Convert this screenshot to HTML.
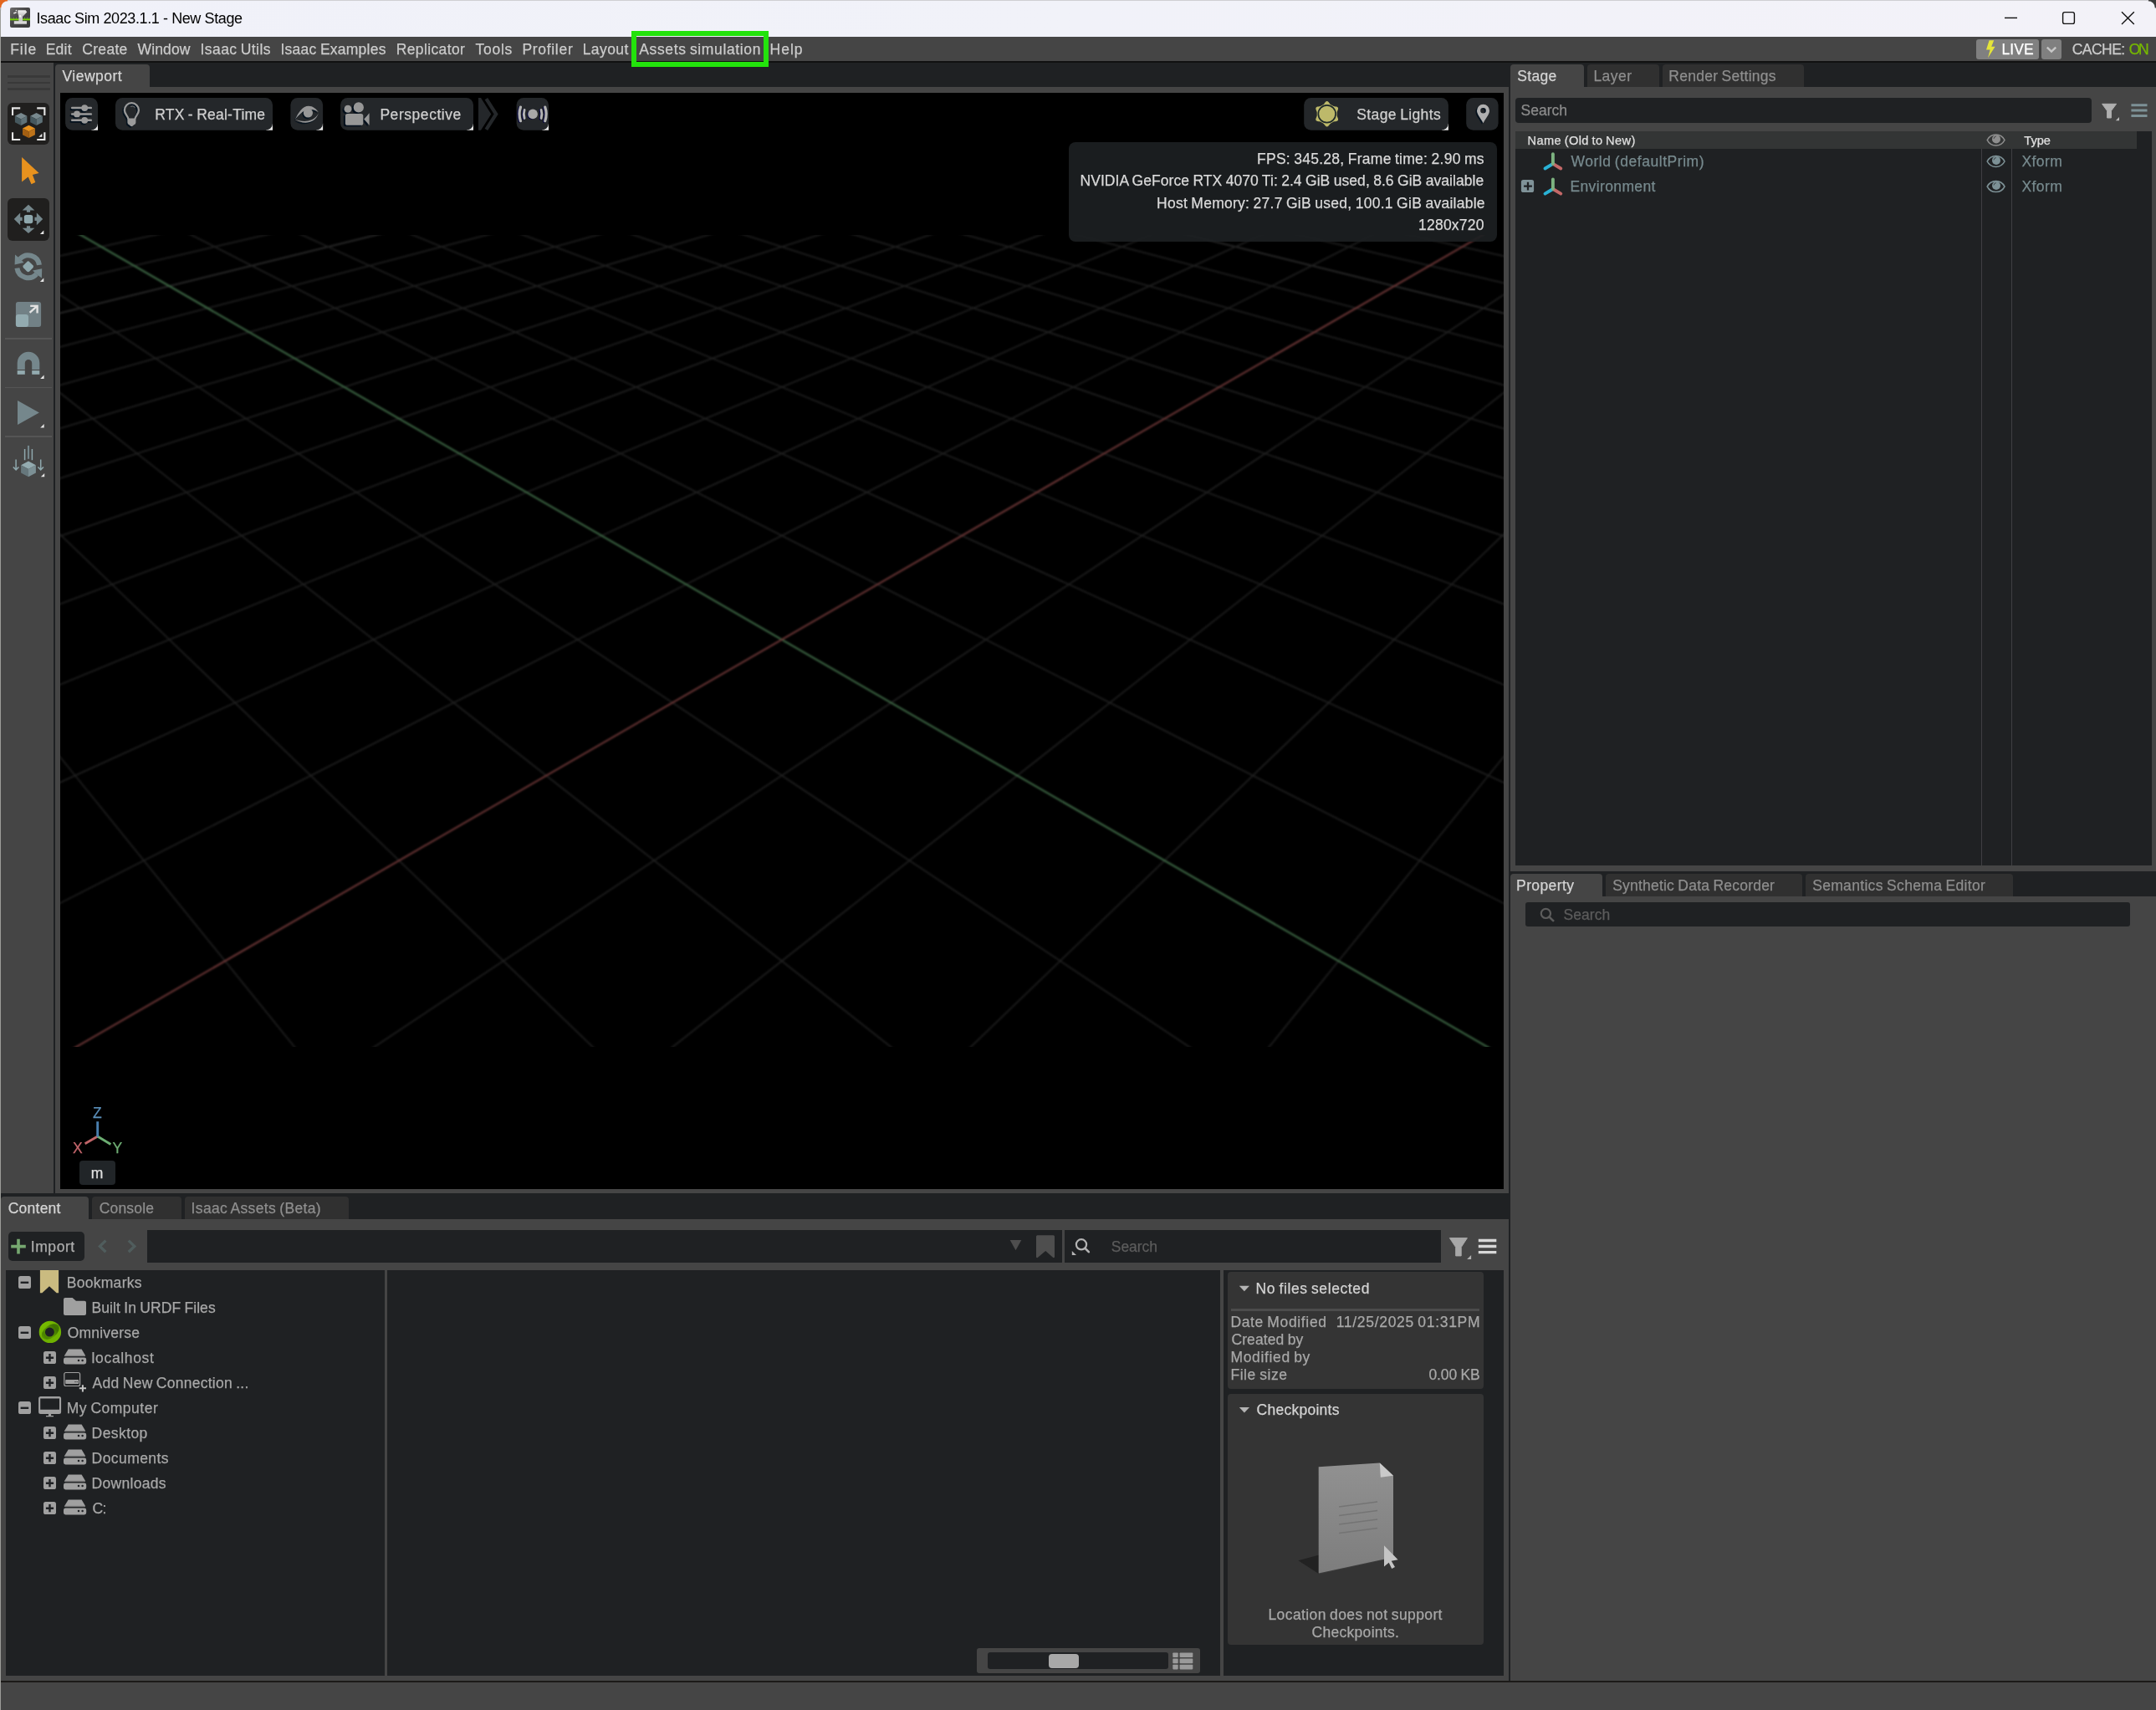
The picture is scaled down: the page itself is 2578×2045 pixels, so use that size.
<!DOCTYPE html>
<html><head><meta charset="utf-8"><title>Isaac Sim 2023.1.1 - New Stage</title>
<style>
html,body{margin:0;padding:0;background:#454545;}
body{width:2578px;height:2045px;position:relative;overflow:hidden;font-family:"Liberation Sans", sans-serif;}
.b{position:absolute;box-sizing:content-box;}
.tx{position:absolute;left:0;top:0;width:2578px;height:2045px;will-change:transform;}
.t{position:absolute;white-space:pre;-webkit-text-stroke:0.25px currentColor;}
svg{position:absolute;overflow:visible;}
</style></head><body>
<div class="b" style="left:0px;top:0px;width:2578.00px;height:44.00px;background:linear-gradient(90deg,#f0f1f9 0%,#f1f2f9 50%,#f3f2f8 100%);"></div>
<div class="b" style="left:0px;top:44px;width:2578.00px;height:29.00px;background:#454545;"></div>
<div class="b" style="left:0px;top:73px;width:2578.00px;height:2.00px;background:#111111;"></div>
<div class="b" style="left:0px;top:75px;width:2578.00px;height:1935.00px;background:#1f2123;"></div>
<div class="b" style="left:0px;top:75px;width:64.00px;height:1352.00px;background:#454545;"></div>
<div class="b" style="left:66px;top:77px;width:113.00px;height:27.00px;background:#454545;border-radius:4px 4px 0 0;"></div>
<div class="b" style="left:66px;top:104px;width:1738.00px;height:1323.00px;background:#454545;"></div>
<div class="b" style="left:72px;top:111px;width:1726.00px;height:1311.00px;background:#000;"></div>
<div class="b" style="left:1806px;top:77px;width:88.00px;height:27.00px;background:#454545;border-radius:4px 4px 0 0;"></div>
<div class="b" style="left:1898px;top:77px;width:86.00px;height:27.00px;background:#303030;border-radius:4px 4px 0 0;"></div>
<div class="b" style="left:1988px;top:77px;width:169.00px;height:27.00px;background:#303030;border-radius:4px 4px 0 0;"></div>
<div class="b" style="left:1806px;top:104px;width:772.00px;height:937.50px;background:#454545;"></div>
<div class="b" style="left:1812px;top:117px;width:688.70px;height:29.70px;background:#1f2123;border-radius:4px;"></div>
<div class="b" style="left:1812px;top:157px;width:761.00px;height:877.70px;background:#1f2123;"></div>
<div class="b" style="left:1812px;top:157px;width:743.00px;height:21.00px;background:#333535;"></div>
<div class="b" style="left:2369px;top:178px;width:1.30px;height:856.70px;background:#3f3f43;"></div>
<div class="b" style="left:2404.8px;top:178px;width:1.30px;height:856.70px;background:#3f3f43;"></div>
<div class="b" style="left:1806px;top:1045px;width:110.00px;height:27.00px;background:#454545;border-radius:4px 4px 0 0;"></div>
<div class="b" style="left:1920px;top:1045px;width:235.00px;height:27.00px;background:#303030;border-radius:4px 4px 0 0;"></div>
<div class="b" style="left:2159px;top:1045px;width:248.00px;height:27.00px;background:#303030;border-radius:4px 4px 0 0;"></div>
<div class="b" style="left:1806px;top:1072px;width:772.00px;height:938.00px;background:#454545;"></div>
<div class="b" style="left:1824px;top:1079px;width:723.30px;height:28.80px;background:#1f2123;border-radius:3px;"></div>
<div class="b" style="left:1px;top:1431px;width:105.00px;height:27.00px;background:#454545;border-radius:4px 4px 0 0;"></div>
<div class="b" style="left:109.7px;top:1431px;width:107.10px;height:27.00px;background:#303030;border-radius:4px 4px 0 0;"></div>
<div class="b" style="left:221px;top:1431px;width:195.70px;height:27.00px;background:#303030;border-radius:4px 4px 0 0;"></div>
<div class="b" style="left:0px;top:1458px;width:1804.00px;height:552.00px;background:#454545;"></div>
<div class="b" style="left:10px;top:1472.5px;width:90.90px;height:35.70px;background:#1f2123;border-radius:5px;"></div>
<div class="b" style="left:176.3px;top:1471px;width:1093.40px;height:38.50px;background:#1f2123;"></div>
<div class="b" style="left:1273px;top:1471px;width:450.00px;height:38.50px;background:#1f2123;"></div>
<div class="b" style="left:7px;top:1519px;width:453.00px;height:484.60px;background:#1f2123;"></div>
<div class="b" style="left:463px;top:1519px;width:996.00px;height:484.60px;background:#1f2123;"></div>
<div class="b" style="left:1463px;top:1519px;width:335.00px;height:484.60px;background:#1f2123;"></div>
<div class="b" style="left:1468px;top:1521.2px;width:306.00px;height:140.30px;background:#343434;border-radius:4px;"></div>
<div class="b" style="left:1472.4px;top:1565.1px;width:296.60px;height:2.80px;background:#4c4c4c;"></div>
<div class="b" style="left:1468px;top:1666.7px;width:306.00px;height:299.90px;background:#343434;border-radius:4px;"></div>
<div class="b" style="left:1167.8px;top:1971.3px;width:267.20px;height:29.40px;background:#454545;border-radius:3px;"></div>
<div class="b" style="left:1181px;top:1975.7px;width:216.30px;height:20.70px;background:#1f2123;border-radius:3px;"></div>
<div class="b" style="left:1253.6px;top:1978px;width:36.10px;height:16.70px;background:#a8a8a8;border-radius:4px;"></div>
<div class="b" style="left:0px;top:2010px;width:2578.00px;height:2.00px;background:#1c1a18;"></div>
<div class="b" style="left:0px;top:2012px;width:2578.00px;height:33.00px;background:#454545;"></div>
<div class="b" style="left:755px;top:37px;width:152px;height:31px;border:6px solid #23e30c;"></div>
<div class="b" style="left:2363px;top:47px;width:74.70px;height:24.00px;background:#808080;border-radius:3px;"></div>
<div class="b" style="left:2441px;top:47px;width:24.00px;height:24.00px;background:#808080;border-radius:3px;"></div>
<div class="b" style="left:8.8px;top:122.5px;width:50.50px;height:50.90px;background:#201f1e;border-radius:6px;"></div>
<div class="b" style="left:8.8px;top:236.5px;width:50.50px;height:51.00px;background:#201f1e;border-radius:6px;"></div>
<div class="b" style="left:6px;top:404.25px;width:56.00px;height:1.50px;background:#555555;"></div>
<div class="b" style="left:6px;top:462.75px;width:56.00px;height:1.50px;background:#555555;"></div>
<div class="b" style="left:6px;top:521.25px;width:56.00px;height:1.50px;background:#555555;"></div>
<div class="b" style="left:9.1px;top:89.89999999999999px;width:50.70px;height:2.80px;background:#393939;"></div>
<div class="b" style="left:9.1px;top:97.5px;width:50.70px;height:2.80px;background:#393939;"></div>
<div class="b" style="left:9.1px;top:105.1px;width:50.70px;height:2.80px;background:#393939;"></div>
<svg class="b" style="left:72px;top:281px;overflow:hidden" width="1726" height="971" viewBox="72 281 1726 971"><g style="filter:blur(0.8px)"><g stroke="#202020" stroke-width="1.7"><line x1="934.8" y1="-174.6" x2="15579.9" y2="764.9" stroke="#2e2e2e"/><line x1="934.8" y1="-174.6" x2="-13710.3" y2="764.9" stroke="#2e2e2e"/><line x1="921.1" y1="-173.7" x2="16495.3" y2="840.4"/><line x1="948.5" y1="-173.7" x2="-14625.7" y2="840.4"/><line x1="907.3" y1="-172.8" x2="17551.4" y2="927.5"/><line x1="962.3" y1="-172.8" x2="-15681.8" y2="927.5"/><line x1="893.2" y1="-171.9" x2="18783.6" y2="1029.1"/><line x1="976.4" y1="-171.9" x2="-16914.0" y2="1029.1"/><line x1="878.9" y1="-171.0" x2="20239.8" y2="1149.2"/><line x1="990.7" y1="-171.0" x2="-18370.2" y2="1149.2"/><line x1="864.4" y1="-170.1" x2="21987.2" y2="1293.4"/><line x1="1005.2" y1="-170.1" x2="-20117.6" y2="1293.4"/><line x1="849.7" y1="-169.1" x2="24122.9" y2="1469.5"/><line x1="1019.9" y1="-169.1" x2="-22253.3" y2="1469.5"/><line x1="834.7" y1="-168.2" x2="26792.6" y2="1689.7"/><line x1="1034.9" y1="-168.2" x2="-24923.0" y2="1689.7"/><line x1="819.5" y1="-167.2" x2="30225.1" y2="1972.8"/><line x1="1050.1" y1="-167.2" x2="-28355.5" y2="1972.8"/><line x1="804.0" y1="-166.2" x2="34801.7" y2="2350.3"/><line x1="1065.6" y1="-166.2" x2="-32932.1" y2="2350.3"/><line x1="788.3" y1="-165.2" x2="41208.9" y2="2878.7" stroke="#2e2e2e"/><line x1="1081.3" y1="-165.2" x2="-39339.3" y2="2878.7" stroke="#2e2e2e"/><line x1="772.4" y1="-164.2" x2="50819.8" y2="3671.4"/><line x1="1097.2" y1="-164.2" x2="-48950.2" y2="3671.4"/><line x1="756.2" y1="-163.1" x2="66837.9" y2="4992.6"/><line x1="1113.4" y1="-163.1" x2="-64968.3" y2="4992.6"/><line x1="739.7" y1="-162.1" x2="98874.2" y2="7634.9"/><line x1="1129.9" y1="-162.1" x2="-97004.6" y2="7634.9"/><line x1="723.0" y1="-161.0" x2="194982.9" y2="15561.8"/><line x1="1146.6" y1="-161.0" x2="-193113.3" y2="15561.8"/><line x1="706.0" y1="-159.9" x2="1108872.3" y2="91240.1"/><line x1="1163.6" y1="-159.9" x2="-1107002.7" y2="91240.1"/><line x1="688.7" y1="-158.8" x2="1087733.9" y2="91240.1"/><line x1="1180.9" y1="-158.8" x2="-1085864.3" y2="91240.1"/><line x1="671.1" y1="-157.7" x2="1066595.5" y2="91240.1"/><line x1="1198.5" y1="-157.7" x2="-1064725.9" y2="91240.1"/><line x1="653.2" y1="-156.5" x2="1045457.0" y2="91240.1"/><line x1="1216.4" y1="-156.5" x2="-1043587.4" y2="91240.1"/><line x1="635.0" y1="-155.4" x2="1024318.6" y2="91240.1"/><line x1="1234.6" y1="-155.4" x2="-1022449.0" y2="91240.1"/><line x1="616.4" y1="-154.2" x2="1003180.1" y2="91240.1" stroke="#2e2e2e"/><line x1="1253.2" y1="-154.2" x2="-1001310.5" y2="91240.1" stroke="#2e2e2e"/><line x1="597.6" y1="-153.0" x2="982041.7" y2="91240.1"/><line x1="1272.0" y1="-153.0" x2="-980172.1" y2="91240.1"/><line x1="578.4" y1="-151.7" x2="960903.2" y2="91240.1"/><line x1="1291.2" y1="-151.7" x2="-959033.6" y2="91240.1"/><line x1="558.9" y1="-150.5" x2="939764.8" y2="91240.1"/><line x1="1310.7" y1="-150.5" x2="-937895.2" y2="91240.1"/><line x1="539.0" y1="-149.2" x2="918626.4" y2="91240.1"/><line x1="1330.6" y1="-149.2" x2="-916756.8" y2="91240.1"/><line x1="518.7" y1="-147.9" x2="897487.9" y2="91240.1"/><line x1="1350.9" y1="-147.9" x2="-895618.3" y2="91240.1"/><line x1="498.1" y1="-146.6" x2="876349.5" y2="91240.1"/><line x1="1371.5" y1="-146.6" x2="-874479.9" y2="91240.1"/><line x1="477.1" y1="-145.2" x2="855211.0" y2="91240.1"/><line x1="1392.5" y1="-145.2" x2="-853341.4" y2="91240.1"/><line x1="455.8" y1="-143.9" x2="834072.6" y2="91240.1"/><line x1="1413.8" y1="-143.9" x2="-832203.0" y2="91240.1"/><line x1="434.0" y1="-142.5" x2="812934.2" y2="91240.1"/><line x1="1435.6" y1="-142.5" x2="-811064.6" y2="91240.1"/><line x1="411.8" y1="-141.0" x2="791795.7" y2="91240.1" stroke="#2e2e2e"/><line x1="1457.8" y1="-141.0" x2="-789926.1" y2="91240.1" stroke="#2e2e2e"/><line x1="389.1" y1="-139.6" x2="770657.3" y2="91240.1"/><line x1="1480.5" y1="-139.6" x2="-768787.7" y2="91240.1"/><line x1="366.1" y1="-138.1" x2="749518.8" y2="91240.1"/><line x1="1503.5" y1="-138.1" x2="-747649.2" y2="91240.1"/><line x1="342.5" y1="-136.6" x2="728380.4" y2="91240.1"/><line x1="1527.1" y1="-136.6" x2="-726510.8" y2="91240.1"/><line x1="318.5" y1="-135.1" x2="707241.9" y2="91240.1"/><line x1="1551.1" y1="-135.1" x2="-705372.3" y2="91240.1"/><line x1="294.1" y1="-133.5" x2="686103.5" y2="91240.1"/><line x1="1575.5" y1="-133.5" x2="-684233.9" y2="91240.1"/><line x1="269.1" y1="-131.9" x2="664965.1" y2="91240.1"/><line x1="1600.5" y1="-131.9" x2="-663095.5" y2="91240.1"/><line x1="243.6" y1="-130.2" x2="643826.6" y2="91240.1"/><line x1="1626.0" y1="-130.2" x2="-641957.0" y2="91240.1"/><line x1="217.6" y1="-128.6" x2="622688.2" y2="91240.1"/><line x1="1652.0" y1="-128.6" x2="-620818.6" y2="91240.1"/><line x1="191.1" y1="-126.9" x2="601549.7" y2="91240.1"/><line x1="1678.5" y1="-126.9" x2="-599680.1" y2="91240.1"/><line x1="164.0" y1="-125.1" x2="580411.3" y2="91240.1" stroke="#2e2e2e"/><line x1="1705.6" y1="-125.1" x2="-578541.7" y2="91240.1" stroke="#2e2e2e"/><line x1="136.3" y1="-123.4" x2="559272.9" y2="91240.1"/><line x1="1733.3" y1="-123.4" x2="-557403.3" y2="91240.1"/><line x1="108.1" y1="-121.6" x2="538134.4" y2="91240.1"/><line x1="1761.5" y1="-121.6" x2="-536264.8" y2="91240.1"/><line x1="79.2" y1="-119.7" x2="516996.0" y2="91240.1"/><line x1="1790.4" y1="-119.7" x2="-515126.4" y2="91240.1"/><line x1="49.7" y1="-117.8" x2="495857.5" y2="91240.1"/><line x1="1819.9" y1="-117.8" x2="-493987.9" y2="91240.1"/><line x1="19.5" y1="-115.9" x2="474719.1" y2="91240.1"/><line x1="1850.1" y1="-115.9" x2="-472849.5" y2="91240.1"/><line x1="-11.4" y1="-113.9" x2="453580.6" y2="91240.1"/><line x1="1881.0" y1="-113.9" x2="-451711.0" y2="91240.1"/><line x1="-42.9" y1="-111.9" x2="432442.2" y2="91240.1"/><line x1="1912.5" y1="-111.9" x2="-430572.6" y2="91240.1"/><line x1="-75.2" y1="-109.8" x2="411303.8" y2="91240.1"/><line x1="1944.8" y1="-109.8" x2="-409434.2" y2="91240.1"/><line x1="-108.2" y1="-107.7" x2="390165.3" y2="91240.1"/><line x1="1977.8" y1="-107.7" x2="-388295.7" y2="91240.1"/><line x1="-142.0" y1="-105.5" x2="369026.9" y2="91240.1" stroke="#2e2e2e"/><line x1="2011.6" y1="-105.5" x2="-367157.3" y2="91240.1" stroke="#2e2e2e"/><line x1="-176.7" y1="-103.3" x2="347888.4" y2="91240.1"/><line x1="2046.3" y1="-103.3" x2="-346018.8" y2="91240.1"/><line x1="-212.1" y1="-101.0" x2="326750.0" y2="91240.1"/><line x1="2081.7" y1="-101.0" x2="-324880.4" y2="91240.1"/><line x1="-248.4" y1="-98.7" x2="305611.6" y2="91240.1"/><line x1="2118.0" y1="-98.7" x2="-303742.0" y2="91240.1"/><line x1="-285.6" y1="-96.3" x2="284473.1" y2="91240.1"/><line x1="2155.2" y1="-96.3" x2="-282603.5" y2="91240.1"/><line x1="-323.8" y1="-93.8" x2="263334.7" y2="91240.1"/><line x1="2193.4" y1="-93.8" x2="-261465.1" y2="91240.1"/><line x1="-362.9" y1="-91.3" x2="242196.2" y2="91240.1"/><line x1="2232.5" y1="-91.3" x2="-240326.6" y2="91240.1"/><line x1="-403.0" y1="-88.8" x2="221057.8" y2="91240.1"/><line x1="2272.6" y1="-88.8" x2="-219188.2" y2="91240.1"/><line x1="-444.1" y1="-86.1" x2="199919.4" y2="91240.1"/><line x1="2313.7" y1="-86.1" x2="-198049.8" y2="91240.1"/><line x1="-486.4" y1="-83.4" x2="178780.9" y2="91240.1"/><line x1="2356.0" y1="-83.4" x2="-176911.3" y2="91240.1"/><line x1="-574.2" y1="-77.8" x2="136504.0" y2="91240.1"/><line x1="2443.8" y1="-77.8" x2="-134634.4" y2="91240.1"/><line x1="-620.0" y1="-74.8" x2="115365.6" y2="91240.1"/><line x1="2489.6" y1="-74.8" x2="-113496.0" y2="91240.1"/><line x1="-667.0" y1="-71.8" x2="94227.1" y2="91240.1"/><line x1="2536.6" y1="-71.8" x2="-92357.5" y2="91240.1"/><line x1="-715.4" y1="-68.7" x2="73088.7" y2="91240.1"/><line x1="2585.0" y1="-68.7" x2="-71219.1" y2="91240.1"/><line x1="-765.1" y1="-65.5" x2="51950.3" y2="91240.1"/><line x1="2634.7" y1="-65.5" x2="-50080.7" y2="91240.1"/><line x1="-816.2" y1="-62.3" x2="30811.8" y2="91240.1"/><line x1="2685.8" y1="-62.3" x2="-28942.2" y2="91240.1"/><line x1="-868.9" y1="-58.9" x2="9673.4" y2="91240.1"/><line x1="2738.5" y1="-58.9" x2="-7803.8" y2="91240.1"/><line x1="-923.2" y1="-55.4" x2="-11465.1" y2="91240.1"/><line x1="2792.8" y1="-55.4" x2="13334.7" y2="91240.1"/><line x1="-979.1" y1="-51.8" x2="-32603.5" y2="91240.1"/><line x1="2848.7" y1="-51.8" x2="34473.1" y2="91240.1"/><line x1="-1036.7" y1="-48.1" x2="-53741.9" y2="91240.1" stroke="#2e2e2e"/><line x1="2906.3" y1="-48.1" x2="55611.5" y2="91240.1" stroke="#2e2e2e"/><line x1="-1096.1" y1="-44.3" x2="-74880.4" y2="91240.1"/><line x1="2965.7" y1="-44.3" x2="76750.0" y2="91240.1"/><line x1="-1157.4" y1="-40.4" x2="-96018.8" y2="91240.1"/><line x1="3027.0" y1="-40.4" x2="97888.4" y2="91240.1"/><line x1="-1220.6" y1="-36.3" x2="-117157.3" y2="91240.1"/><line x1="3090.2" y1="-36.3" x2="119026.9" y2="91240.1"/><line x1="-1286.0" y1="-32.1" x2="-138295.7" y2="91240.1"/><line x1="3155.6" y1="-32.1" x2="140165.3" y2="91240.1"/><line x1="-1353.5" y1="-27.8" x2="-159434.2" y2="91240.1"/><line x1="3223.1" y1="-27.8" x2="161303.8" y2="91240.1"/><line x1="-1423.3" y1="-23.3" x2="-180572.6" y2="91240.1"/><line x1="3292.9" y1="-23.3" x2="182442.2" y2="91240.1"/><line x1="-1495.5" y1="-18.7" x2="-201711.0" y2="91240.1"/><line x1="3365.1" y1="-18.7" x2="203580.6" y2="91240.1"/><line x1="-1570.3" y1="-13.9" x2="-222849.5" y2="91240.1"/><line x1="3439.9" y1="-13.9" x2="224719.1" y2="91240.1"/><line x1="-1647.7" y1="-8.9" x2="-243987.9" y2="91240.1"/><line x1="3517.3" y1="-8.9" x2="245857.5" y2="91240.1"/><line x1="-1728.0" y1="-3.8" x2="-265126.4" y2="91240.1" stroke="#2e2e2e"/><line x1="3597.6" y1="-3.8" x2="266996.0" y2="91240.1" stroke="#2e2e2e"/><line x1="-1811.2" y1="1.6" x2="-286264.8" y2="91240.1"/><line x1="3680.8" y1="1.6" x2="288134.4" y2="91240.1"/><line x1="-1897.5" y1="7.1" x2="-307403.2" y2="91240.1"/><line x1="3767.1" y1="7.1" x2="309272.8" y2="91240.1"/><line x1="-1987.2" y1="12.9" x2="-328541.7" y2="91240.1"/><line x1="3856.8" y1="12.9" x2="330411.3" y2="91240.1"/><line x1="-2080.4" y1="18.8" x2="-349680.1" y2="91240.1"/><line x1="3950.0" y1="18.8" x2="351549.7" y2="91240.1"/><line x1="-2177.3" y1="25.1" x2="-370818.6" y2="91240.1"/><line x1="4046.9" y1="25.1" x2="372688.2" y2="91240.1"/><line x1="-2278.2" y1="31.5" x2="-391957.0" y2="91240.1"/><line x1="4147.8" y1="31.5" x2="393826.6" y2="91240.1"/><line x1="-2383.2" y1="38.3" x2="-413095.5" y2="91240.1"/><line x1="4252.8" y1="38.3" x2="414965.1" y2="91240.1"/><line x1="-2492.8" y1="45.3" x2="-434233.9" y2="91240.1"/><line x1="4362.4" y1="45.3" x2="436103.5" y2="91240.1"/><line x1="-2607.1" y1="52.6" x2="-455372.3" y2="91240.1"/><line x1="4476.7" y1="52.6" x2="457241.9" y2="91240.1"/><line x1="-2726.5" y1="60.3" x2="-476510.8" y2="91240.1" stroke="#2e2e2e"/><line x1="4596.1" y1="60.3" x2="478380.4" y2="91240.1" stroke="#2e2e2e"/><line x1="-2851.3" y1="68.3" x2="-497649.2" y2="91240.1"/><line x1="4720.9" y1="68.3" x2="499518.8" y2="91240.1"/><line x1="-2981.9" y1="76.7" x2="-518787.7" y2="91240.1"/><line x1="4851.5" y1="76.7" x2="520657.3" y2="91240.1"/><line x1="-3118.8" y1="85.5" x2="-539926.1" y2="91240.1"/><line x1="4988.4" y1="85.5" x2="541795.7" y2="91240.1"/><line x1="-3262.3" y1="94.7" x2="-561064.5" y2="91240.1"/><line x1="5131.9" y1="94.7" x2="562934.1" y2="91240.1"/><line x1="-3413.0" y1="104.3" x2="-582203.0" y2="91240.1"/><line x1="5282.6" y1="104.3" x2="584072.6" y2="91240.1"/><line x1="-3571.4" y1="114.5" x2="-603341.4" y2="91240.1"/><line x1="5441.0" y1="114.5" x2="605211.0" y2="91240.1"/><line x1="-3738.2" y1="125.2" x2="-624479.9" y2="91240.1"/><line x1="5607.8" y1="125.2" x2="626349.5" y2="91240.1"/><line x1="-3913.9" y1="136.5" x2="-645618.3" y2="91240.1"/><line x1="5783.5" y1="136.5" x2="647487.9" y2="91240.1"/><line x1="-4099.5" y1="148.4" x2="-666756.7" y2="91240.1"/><line x1="5969.1" y1="148.4" x2="668626.3" y2="91240.1"/><line x1="-4295.6" y1="160.9" x2="-687895.2" y2="91240.1" stroke="#2e2e2e"/><line x1="6165.2" y1="160.9" x2="689764.8" y2="91240.1" stroke="#2e2e2e"/><line x1="-4503.3" y1="174.3" x2="-709033.6" y2="91240.1"/><line x1="6372.9" y1="174.3" x2="710903.2" y2="91240.1"/><line x1="-4723.6" y1="188.4" x2="-730172.1" y2="91240.1"/><line x1="6593.2" y1="188.4" x2="732041.7" y2="91240.1"/><line x1="-4957.6" y1="203.4" x2="-751310.5" y2="91240.1"/><line x1="6827.2" y1="203.4" x2="753180.1" y2="91240.1"/><line x1="-5206.7" y1="219.4" x2="-772449.0" y2="91240.1"/><line x1="7076.3" y1="219.4" x2="774318.6" y2="91240.1"/><line x1="-5472.4" y1="236.4" x2="-793587.4" y2="91240.1"/><line x1="7342.0" y1="236.4" x2="795457.0" y2="91240.1"/><line x1="-5756.5" y1="254.7" x2="-814725.8" y2="91240.1"/><line x1="7626.1" y1="254.7" x2="816595.4" y2="91240.1"/><line x1="-6060.9" y1="274.2" x2="-835864.3" y2="91240.1"/><line x1="7930.5" y1="274.2" x2="837733.9" y2="91240.1"/><line x1="-6387.8" y1="295.2" x2="-857002.7" y2="91240.1"/><line x1="8257.4" y1="295.2" x2="858872.3" y2="91240.1"/><line x1="-6739.8" y1="317.7" x2="-878141.2" y2="91240.1"/><line x1="8609.4" y1="317.7" x2="880010.8" y2="91240.1"/><line x1="-7120.0" y1="342.1" x2="-899279.6" y2="91240.1" stroke="#2e2e2e"/><line x1="8989.6" y1="342.1" x2="901149.2" y2="91240.1" stroke="#2e2e2e"/><line x1="-7531.9" y1="368.6" x2="-920418.0" y2="91240.1"/><line x1="9401.5" y1="368.6" x2="922287.6" y2="91240.1"/><line x1="-7979.6" y1="397.3" x2="-941556.5" y2="91240.1"/><line x1="9849.2" y1="397.3" x2="943426.1" y2="91240.1"/><line x1="-8468.0" y1="428.6" x2="-962694.9" y2="91240.1"/><line x1="10337.6" y1="428.6" x2="964564.5" y2="91240.1"/><line x1="-9003.0" y1="462.9" x2="-983833.4" y2="91240.1"/><line x1="10872.6" y1="462.9" x2="985703.0" y2="91240.1"/><line x1="-9591.4" y1="500.7" x2="-1004971.8" y2="91240.1"/><line x1="11461.0" y1="500.7" x2="1006841.4" y2="91240.1"/><line x1="-10241.8" y1="542.4" x2="-1026110.3" y2="91240.1"/><line x1="12111.4" y1="542.4" x2="1027979.9" y2="91240.1"/><line x1="-10964.4" y1="588.7" x2="-1047248.7" y2="91240.1"/><line x1="12834.0" y1="588.7" x2="1049118.3" y2="91240.1"/><line x1="-11772.0" y1="640.6" x2="-1068387.1" y2="91240.1"/><line x1="13641.6" y1="640.6" x2="1070256.7" y2="91240.1"/><line x1="-12680.6" y1="698.8" x2="-1089525.6" y2="91240.1"/><line x1="14550.2" y1="698.8" x2="1091395.2" y2="91240.1"/><line x1="-13710.3" y1="764.9" x2="-1110664.0" y2="91240.1" stroke="#2e2e2e"/><line x1="15579.9" y1="764.9" x2="1112533.6" y2="91240.1" stroke="#2e2e2e"/></g><line x1="-529.7" y1="-80.6" x2="157642.5" y2="91240.1" stroke="#406c48" stroke-width="2"/><line x1="2399.3" y1="-80.6" x2="-155772.9" y2="91240.1" stroke="#6e3737" stroke-width="2"/></g></svg>
<div class="b" style="left:1277.7px;top:169.6px;width:512.70px;height:119.40px;background:rgba(29,32,34,0.9);border-radius:8px;"></div>
<div class="b" style="left:95.2px;top:1387.7px;width:42.60px;height:29.60px;background:#212528;border-radius:4px;"></div>
<svg class="b" style="left:10px;top:7px" width="28" height="28" viewBox="10 7 28 28" ><defs><linearGradient id="ai" x1="0" y1="0" x2="1" y2="1"><stop offset="0" stop-color="#6c6c6c"/><stop offset="0.45" stop-color="#464646"/><stop offset="1" stop-color="#38383a"/></linearGradient>
<linearGradient id="aw" x1="0" y1="0" x2="0" y2="1"><stop offset="0" stop-color="#f4f4f4"/><stop offset="1" stop-color="#b8b8b8"/></linearGradient></defs>
<rect x="12" y="9" width="24" height="24" rx="2" fill="url(#ai)"/>
<rect x="12" y="22.3" width="24" height="2" fill="#76d600"/>
<rect x="12" y="20.4" width="24" height="1.9" fill="#4a3a66" opacity="0.55"/><path d="M12.4 21.5H36" stroke="#76d600" stroke-width="0.9" stroke-dasharray="1.1 2.2" opacity="0.9"/>
<rect x="22.4" y="16.5" width="4.6" height="9" fill="#c8c8c8"/>
<path d="M21.3 12.2H30.6L32.3 14.4L27 20H22.5L21.3 15.5Z" fill="url(#aw)"/>
<rect x="16.2" y="14.6" width="3.6" height="1.6" fill="#e8e8e8" transform="rotate(-20 18 15.4)"/>
<circle cx="19.4" cy="12.6" r="0.8" fill="#f0f0f0"/>
<circle cx="24.2" cy="19.4" r="1.3" fill="#f4f4f4"/>
<rect x="16.8" y="25.3" width="15.2" height="3.6" fill="url(#aw)"/></svg>
<svg class="b" style="left:0px;top:0px" width="12" height="12" viewBox="0 0 12 12" ><path d="M0 0H9.4V1.2A8.2 8.2 0 0 0 1.2 9.4H0Z" fill="#e2661f"/><rect x="0" y="9.4" width="1.2" height="3" fill="#a8a8a8"/></svg>
<svg class="b" style="left:2566px;top:0px" width="12" height="12" viewBox="2566 0 12 12" ><path d="M2578 0H2568.6V1.2A8.2 8.2 0 0 1 2576.8 9.4H2578Z" fill="#3a3a3a"/></svg>
<div class="b" style="left:0;top:12px;width:1.2px;height:2033px;background:#9c9c98"></div>
<div class="b" style="left:9.4px;top:0;width:2559.2px;height:1.1px;background:#cfcfd2"></div>
<svg class="b" style="left:2390px;top:8px" width="170" height="28" viewBox="2390 8 170 28" ><g stroke="#111" stroke-width="1.4" fill="none"><path d="M2397 21.4h15"/><rect x="2466.6" y="14.6" width="13.8" height="13.8" rx="2.2"/><path d="M2537 14.2l14.8 14.8M2551.8 14.2l-14.8 14.8"/></g></svg>
<svg class="b" style="left:2370px;top:46px" width="96" height="26" viewBox="2370 46 96 26" ><path d="M2378.6 48.2l5.6 0-3 7.6 4.4 0-8.6 13.4 2.6-9.8-4.6 0z" fill="#e4e43a"/>
<path d="M2447.8 56.6l5.2 5 5.2-5" stroke="#c8c8c8" stroke-width="2.4" fill="none"/></svg>
<svg class="b" style="left:0px;top:115px" width="66" height="470" viewBox="0 115 66 470" ><path d="M24.2 129.35000000000002H15.05V138.10000000000002" stroke="#e6e6e6" stroke-width="2.1" fill="none"/><path d="M44.2 129.35000000000002H53.35V138.10000000000002" stroke="#e6e6e6" stroke-width="2.1" fill="none"/><path d="M24.2 166.95H15.05V158.2" stroke="#e6e6e6" stroke-width="2.1" fill="none"/><path d="M44.2 166.95H53.35V158.2" stroke="#e6e6e6" stroke-width="2.1" fill="none"/><polygon points="25.10,135.00 32.30,138.75 25.10,142.50 17.90,138.75" fill="#78898e" /><polygon points="17.90,138.75 25.10,142.50 25.10,150.00 17.90,146.25" fill="#46585e" /><polygon points="25.10,142.50 32.30,138.75 32.30,146.25 25.10,150.00" fill="#5f7278" /><polygon points="43.50,135.00 50.80,138.75 43.50,142.50 36.20,138.75" fill="#78898e" /><polygon points="36.20,138.75 43.50,142.50 43.50,150.00 36.20,146.25" fill="#46585e" /><polygon points="43.50,142.50 50.80,138.75 50.80,146.25 43.50,150.00" fill="#5f7278" /><polygon points="34.45,149.70 41.90,153.52 34.45,157.35 27.00,153.52" fill="#e8921e" /><polygon points="27.00,153.52 34.45,157.35 34.45,165.00 27.00,161.17" fill="#a35f12" /><polygon points="34.45,157.35 41.90,153.52 41.90,161.17 34.45,165.00" fill="#bd731a" /><polygon points="50.30,159.80 50.30,163.80 46.30,163.80" fill="#e6e6e6" /><polygon points="26.10,187.90 46.60,206.90 38.90,209.00 42.30,218.10 37.50,220.20 33.70,211.40 26.10,217.40" fill="#e8921e" /><rect x="28.8" y="256.9" width="10.5" height="10.3" rx="2.6" fill="#8fa8ad"/><polygon points="34.00,244.70 41.40,251.40 36.10,251.40 36.10,253.80 31.90,253.80 31.90,251.40 26.70,251.40" fill="#75878c" /><polygon points="34.00,279.10 41.40,272.80 36.10,272.80 36.10,270.30 31.90,270.30 31.90,272.80 26.70,272.80" fill="#75878c" /><polygon points="16.80,261.90 24.20,254.50 24.20,259.80 26.70,259.80 26.70,264.00 24.20,264.00 24.20,269.30" fill="#75878c" /><polygon points="51.20,261.90 43.80,254.50 43.80,259.80 41.40,259.80 41.40,264.00 43.80,264.00 43.80,269.30" fill="#75878c" /><polygon points="52.30,275.50 52.30,279.90 47.90,279.90" fill="#e6e6e6" /><path d="M46.97 316.94A13.4 13.4 0 0 0 23.74 309.83" stroke="#75878c" stroke-width="6" fill="none"/><path d="M20.43 320.66A13.4 13.4 0 0 0 43.66 327.77" stroke="#75878c" stroke-width="6" fill="none"/><polygon points="18.00,304.60 17.60,316.40 28.60,314.00 24.00,309.60" fill="#75878c" /><polygon points="49.90,332.60 50.20,321.20 39.00,323.60 43.60,328.00" fill="#75878c" /><rect x="28.6" y="313.7" width="10.2" height="10.2" rx="2.2" fill="#8fa8ad" transform="rotate(45 33.7 318.8)"/><polygon points="52.30,332.60 52.30,337.00 47.90,337.00" fill="#e6e6e6" /><rect x="18.9" y="360.9" width="30.2" height="30.1" rx="3" fill="#728186"/><rect x="18.9" y="376" width="15.1" height="15" rx="3" fill="#93abb0"/><path d="M35.6 373.8L44.2 366.2M36.2 365.9H44.6V374.4" stroke="#e2e2e2" stroke-width="2.4" fill="none"/><path d="M20.7 441.9V434.1A13.3 13.3 0 0 1 47.3 434.1V441.9H38.2V434.2A4.2 4.2 0 0 0 29.8 434.2V441.9Z" fill="#75878c"/><rect x="20.7" y="443.1" width="9.1" height="4.7" fill="#93abb0"/><rect x="38.2" y="443.1" width="9.1" height="4.7" fill="#93abb0"/><polygon points="52.60,448.60 52.60,453.00 48.20,453.00" fill="#e6e6e6" /><polygon points="21.00,479.00 21.00,507.90 46.90,493.40" fill="#75878c" /><polygon points="52.70,507.10 52.70,511.60 48.20,511.60" fill="#e6e6e6" /><path d="M34 532.9V548.8" stroke="#75878c" stroke-width="2.1"/><path d="M29.6 536.9V550.2M38.4 536.9V550.2" stroke="#8fa8ad" stroke-width="1.5"/><polygon points="34.00,551.60 42.90,556.25 34.00,560.90 25.10,556.25" fill="#93abb0" /><polygon points="25.10,556.25 34.00,560.90 34.00,570.20 25.10,565.55" fill="#66777c" /><polygon points="34.00,560.90 42.90,556.25 42.90,565.55 34.00,570.20" fill="#7c9095" /><path d="M19.1 549.5V561.6M15.8 558.4L19.1 561.8L22.4 558.4M48.7 549.5V561.6M45.4 558.4L48.7 561.8L52 558.4" stroke="#8fa8ad" stroke-width="1.5" fill="none"/><polygon points="53.20,565.90 53.20,570.20 48.90,570.20" fill="#e6e6e6" /></svg>
<svg class="b" style="left:72px;top:111px" width="600" height="50" viewBox="72 111 600 50" ><polygon points="117.00,147.60 117.00,155.80 108.80,155.80" fill="#e8e8e8" /><rect x="78.1" y="117" width="38.90" height="38.8" rx="8.5" fill="#24272a"/><polygon points="326.00,147.60 326.00,155.80 317.80,155.80" fill="#e8e8e8" /><rect x="138" y="117" width="188.00" height="38.8" rx="8.5" fill="#24272a"/><polygon points="386.10,147.60 386.10,155.80 377.90,155.80" fill="#e8e8e8" /><rect x="347.4" y="117" width="38.70" height="38.8" rx="8.5" fill="#24272a"/><polygon points="566.00,147.60 566.00,155.80 557.80,155.80" fill="#e8e8e8" /><rect x="407.1" y="117" width="158.90" height="38.8" rx="8.5" fill="#24272a"/><polygon points="656.00,147.60 656.00,155.80 647.80,155.80" fill="#e8e8e8" /><rect x="617.6" y="117" width="38.40" height="38.8" rx="8.5" fill="#24272a"/><g transform="translate(-1.4 1.8)" fill="#05121e" stroke="#05121e"><path d="M86.2 129.1H108.8" stroke-width="2.5" stroke-linecap="round"/><circle cx="101.2" cy="129.1" r="3.9" stroke="none"/><path d="M86.2 136.4H108.8" stroke-width="2.5" stroke-linecap="round"/><circle cx="92" cy="136.4" r="3.9" stroke="none"/><path d="M86.2 143.8H108.8" stroke-width="2.5" stroke-linecap="round"/><circle cx="101.2" cy="143.8" r="3.9" stroke="none"/></g><g transform="translate(0 0)" fill="#9a9a9a" stroke="#9a9a9a"><path d="M86.2 129.1H108.8" stroke-width="2.5" stroke-linecap="round"/><circle cx="101.2" cy="129.1" r="3.9" stroke="none"/><path d="M86.2 136.4H108.8" stroke-width="2.5" stroke-linecap="round"/><circle cx="92" cy="136.4" r="3.9" stroke="none"/><path d="M86.2 143.8H108.8" stroke-width="2.5" stroke-linecap="round"/><circle cx="101.2" cy="143.8" r="3.9" stroke="none"/></g><g transform="translate(-1.5 1.5)"><path d="M153.4 142.2C153.2 138.6 148.9 137 148.9 131.7A8.5 8.5 0 0 1 165.9 131.7C165.9 137 161.6 138.6 161.4 142.2" stroke="#05121e" stroke-width="2.3" fill="none"/><path d="M152.4 141.5H162.4V146.5Q162.4 148.5 160.4 149.3L158.6 150.8Q157.4 151.7 156.2 150.8L154.4 149.3Q152.4 148.5 152.4 146.5Z" fill="#05121e"/></g><g transform="translate(0 0)"><path d="M153.4 142.2C153.2 138.6 148.9 137 148.9 131.7A8.5 8.5 0 0 1 165.9 131.7C165.9 137 161.6 138.6 161.4 142.2" stroke="#9a9a9a" stroke-width="2.3" fill="none"/><path d="M152.4 141.5H162.4V146.5Q162.4 148.5 160.4 149.3L158.6 150.8Q157.4 151.7 156.2 150.8L154.4 149.3Q152.4 148.5 152.4 146.5Z" fill="#9a9a9a"/></g><path d="M156.2 127.6C158 126.4 160.4 127 161.4 128.8" stroke="#6a6e72" stroke-width="1.1" fill="none"/><g transform="translate(-1.2 1.6)" fill="#05121e"><circle cx="368.4" cy="135" r="5.6"/><path d="M352.8 142.8C357 134 362 126.7 369 126.7C374 126.7 378 130 380.9 134.2C377.5 132 374.5 131 372.5 131C366 129.2 360 134.5 352.8 142.8Z"/><path d="M352.8 142.8C360 145.5 374 147.8 380.9 135.5C376 149.5 361 148.5 352.8 142.8Z"/></g><g transform="translate(0 0)" fill="#979797"><circle cx="368.4" cy="135" r="5.6"/><path d="M352.8 142.8C357 134 362 126.7 369 126.7C374 126.7 378 130 380.9 134.2C377.5 132 374.5 131 372.5 131C366 129.2 360 134.5 352.8 142.8Z"/><path d="M352.8 142.8C360 145.5 374 147.8 380.9 135.5C376 149.5 361 148.5 352.8 142.8Z"/></g><g transform="translate(-2 1.5)" fill="#030f1c"><circle cx="416" cy="130.3" r="4.5"/><circle cx="428.8" cy="128.4" r="6.1"/><rect x="412.9" y="135.9" width="21.4" height="13.9" rx="2.6"/><path d="M435.2 142.5L441.6 135.3V149.8Z"/></g><g transform="translate(0 0)" fill="#979797"><circle cx="416" cy="130.3" r="4.5"/><circle cx="428.8" cy="128.4" r="6.1"/><rect x="412.9" y="135.9" width="21.4" height="13.9" rx="2.6"/><path d="M435.2 142.5L441.6 135.3V149.8Z"/></g><polygon points="572.00,117.00 575.00,117.00 587.30,136.50 575.00,155.80 572.00,155.80" fill="#24272a" /><path d="M581.4 118.1L593.2 136.5L581.4 154.9" stroke="#24272a" stroke-width="4.2" fill="none"/><g transform="translate(-1.2 0.6)" stroke="#06063a" fill="none" stroke-linecap="round"><path d="M627.12 131.32A16.799999999999997 16.799999999999997 0 0 0 627.12 141.48" stroke-width="2.8"/><path d="M647.08 131.32A16.799999999999997 16.799999999999997 0 0 1 647.08 141.48" stroke-width="2.8"/><path d="M622.48 128.13A25.200000000000003 25.200000000000003 0 0 0 622.48 144.67" stroke-width="3.2"/><path d="M651.72 128.13A25.200000000000003 25.200000000000003 0 0 1 651.72 144.67" stroke-width="3.2"/><circle cx="637.1" cy="136.4" r="5.8" fill="#06063a" stroke="none"/></g><g transform="translate(0 0)" stroke="#b4b4b4" fill="none" stroke-linecap="round"><path d="M627.12 131.32A16.799999999999997 16.799999999999997 0 0 0 627.12 141.48" stroke-width="2.8"/><path d="M647.08 131.32A16.799999999999997 16.799999999999997 0 0 1 647.08 141.48" stroke-width="2.8"/><path d="M622.48 128.13A25.200000000000003 25.200000000000003 0 0 0 622.48 144.67" stroke-width="3.2"/><path d="M651.72 128.13A25.200000000000003 25.200000000000003 0 0 1 651.72 144.67" stroke-width="3.2"/><circle cx="637.1" cy="136.4" r="5.8" fill="#a8a8a8" stroke="none"/></g></svg>
<svg class="b" style="left:1555px;top:111px" width="240" height="50" viewBox="1555 111 240 50" ><polygon points="1731.90,147.60 1731.90,155.80 1723.70,155.80" fill="#e8e8e8" /><rect x="1559.2" y="117" width="172.70" height="38.8" rx="8.5" fill="#24272a"/><rect x="1753.2" y="117" width="38.40" height="38.8" rx="8.5" fill="#24272a"/><polygon points="1598.70,136.30 1598.68,135.51 1598.67,134.72 1598.77,133.90 1599.06,132.99 1599.51,131.95 1599.94,130.82 1600.12,129.68 1599.86,128.70 1599.14,127.99 1598.07,127.58 1596.87,127.38 1595.75,127.25 1594.81,127.05 1594.05,126.73 1593.37,126.32 1592.70,125.91 1592.01,125.53 1591.32,125.15 1590.66,124.65 1590.01,123.94 1589.34,123.03 1588.57,122.09 1587.68,121.37 1586.70,121.10 1585.72,121.37 1584.83,122.09 1584.06,123.03 1583.39,123.94 1582.74,124.65 1582.08,125.15 1581.39,125.53 1580.70,125.91 1580.03,126.32 1579.35,126.73 1578.59,127.05 1577.65,127.25 1576.53,127.38 1575.33,127.58 1574.26,127.99 1573.54,128.70 1573.28,129.68 1573.46,130.82 1573.89,131.95 1574.34,132.99 1574.63,133.90 1574.73,134.72 1574.72,135.51 1574.70,136.30 1574.72,137.09 1574.73,137.88 1574.63,138.70 1574.34,139.61 1573.89,140.65 1573.46,141.78 1573.28,142.92 1573.54,143.90 1574.26,144.61 1575.33,145.02 1576.53,145.22 1577.65,145.35 1578.59,145.55 1579.35,145.87 1580.03,146.28 1580.70,146.69 1581.39,147.07 1582.08,147.45 1582.74,147.95 1583.39,148.66 1584.06,149.57 1584.83,150.51 1585.72,151.23 1586.70,151.50 1587.68,151.23 1588.57,150.51 1589.34,149.57 1590.01,148.66 1590.66,147.95 1591.32,147.45 1592.01,147.07 1592.70,146.69 1593.37,146.28 1594.05,145.87 1594.81,145.55 1595.75,145.35 1596.87,145.22 1598.07,145.02 1599.14,144.61 1599.86,143.90 1600.12,142.92 1599.94,141.78 1599.51,140.65 1599.06,139.61 1598.77,138.70 1598.67,137.88 1598.68,137.09" fill="#bdb96a"/><circle cx="1586.7" cy="136.3" r="10.4" fill="#bdb96a" stroke="#1f2a2a" stroke-width="1.7"/><path transform="translate(-1.6 1.2)" fill-rule="evenodd" d="M1773.5 147.2C1770 140.5 1766 137 1766 132.3A7.5 7.5 0 0 1 1781 132.3C1781 137 1777 140.5 1773.5 147.2ZM1773.5 129A3.3 3.3 0 1 0 1773.5 135.6A3.3 3.3 0 1 0 1773.5 129Z" fill="#04101c"/><path transform="translate(0 0)" fill-rule="evenodd" d="M1773.5 147.2C1770 140.5 1766 137 1766 132.3A7.5 7.5 0 0 1 1781 132.3C1781 137 1777 140.5 1773.5 147.2ZM1773.5 129A3.3 3.3 0 1 0 1773.5 135.6A3.3 3.3 0 1 0 1773.5 129Z" fill="#b0b0b0"/></svg>
<svg class="b" style="left:85px;top:1320px" width="65" height="60" viewBox="85 1320 65 60" ><path d="M116.7 1359L101.6 1367.8" stroke="#c06468" stroke-width="2.9"/><path d="M116.7 1359L132.4 1368.4" stroke="#6cae72" stroke-width="2.9"/><path d="M116.7 1341.2V1359.6" stroke="#4a80b0" stroke-width="2.9"/></svg>
<svg class="b" style="left:1810px;top:115px" width="765" height="125" viewBox="1810 115 765 125" ><g stroke-width="3.9" stroke-linecap="round"><path d="M1856.9 195.9L1847.5 201.5" stroke="#29b2d6"/><path d="M1856.9 195.9L1866.3000000000002 201.5" stroke="#c46868"/><path d="M1856.9 195.9V184.3" stroke="#7db380"/></g><g stroke-width="3.9" stroke-linecap="round"><path d="M1856.9 226.0L1847.5 231.6" stroke="#29b2d6"/><path d="M1856.9 226.0L1866.3000000000002 231.6" stroke="#c46868"/><path d="M1856.9 226.0V214.4" stroke="#7db380"/></g><rect x="1818.9" y="215.1" width="15.2" height="15" rx="2.6" fill="#7f9298"/><path d="M1822.1 222.6H1831.9M1827 217.8V227.5" stroke="#1f2124" stroke-width="2.3"/><g><path d="M2376.2 167.5C2380.6 158.9 2392.6 158.9 2397.0 167.5C2392.6 176.1 2380.6 176.1 2376.2 167.5Z" fill="none" stroke="#8e8e8e" stroke-width="1.6"/><circle cx="2387.0" cy="166.4" r="5" fill="#8e8e8e"/><path d="M2384.0 165.9A3.2 3.2 0 0 1 2386.7999999999997 163.1" stroke="#1f2124" stroke-width="0.9" fill="none" opacity="0.75"/></g><g><path d="M2376.2 193C2380.6 184.4 2392.6 184.4 2397.0 193C2392.6 201.6 2380.6 201.6 2376.2 193Z" fill="none" stroke="#7d9196" stroke-width="1.6"/><circle cx="2387.0" cy="191.9" r="5" fill="#7d9196"/><path d="M2384.0 191.4A3.2 3.2 0 0 1 2386.7999999999997 188.6" stroke="#1f2124" stroke-width="0.9" fill="none" opacity="0.75"/></g><g><path d="M2376.2 223.1C2380.6 214.5 2392.6 214.5 2397.0 223.1C2392.6 231.7 2380.6 231.7 2376.2 223.1Z" fill="none" stroke="#7d9196" stroke-width="1.6"/><circle cx="2387.0" cy="222.0" r="5" fill="#7d9196"/><path d="M2384.0 221.5A3.2 3.2 0 0 1 2386.7999999999997 218.7" stroke="#1f2124" stroke-width="0.9" fill="none" opacity="0.75"/></g><path d="M2513.6 124.3H2530.6L2524.4 132.6V141H2519.6V132.6Z" fill="#b0b0b0" stroke="#b0b0b0" stroke-width="1" stroke-linejoin="round"/><polygon points="2534.00,140.00 2534.00,144.20 2529.80,144.20" fill="#b8b8b8" /><path d="M2548.4 125.7H2567.5M2548.4 132H2567.5M2548.4 138.5H2567.5" stroke="#7d9196" stroke-width="3"/></svg>
<svg class="b" style="left:1838px;top:1082px" width="24" height="24" viewBox="1838 1082 24 24" ><circle cx="1848.4" cy="1092.4" r="5.6" stroke="#5c5c5c" stroke-width="2.2" fill="none"/><path d="M1852.6 1096.6L1857.2 1101.2" stroke="#5c5c5c" stroke-width="2.6" stroke-linecap="round"/></svg>
<svg class="b" style="left:5px;top:1470px" width="1795" height="42" viewBox="5 1470 1795 42" ><path d="M13.2 1490.6H30.8M22 1481.8V1499.4" stroke="#76a870" stroke-width="3.6"/><path d="M126.4 1483.6L119.4 1490.4L126.4 1497.2" stroke="#505d5d" stroke-width="3.3" fill="none"/><path d="M153.8 1483.6L160.8 1490.4L153.8 1497.2" stroke="#505d5d" stroke-width="3.3" fill="none"/><polygon points="1207.70,1483.10 1221.30,1483.10 1214.50,1495.30" fill="#4e4e4e" /><path d="M1240.5 1477.2H1259.5A1.5 1.5 0 0 1 1261 1478.7V1503.2A1 1 0 0 1 1259.3 1503.9L1250.2 1496L1240.7 1503.9A1 1 0 0 1 1239 1503.2V1478.7A1.5 1.5 0 0 1 1240.5 1477.2Z" fill="#4e4e4e"/><circle cx="1293" cy="1488.3" r="6.1" stroke="#b4b4b4" stroke-width="2.2" fill="none"/><path d="M1297.5 1492.8L1301.8 1497.2" stroke="#b4b4b4" stroke-width="2.6" stroke-linecap="round"/><polygon points="1281.80,1496.00 1281.80,1501.00 1287.00,1501.00" fill="#b4b4b4" /><path d="M1733.4 1480.6H1754.4L1747.2 1491.6V1501.9H1740.7V1491.6Z" fill="#a8a8a8" stroke="#a8a8a8" stroke-width="1" stroke-linejoin="round"/><polygon points="1759.10,1500.90 1759.10,1505.90 1754.10,1505.90" fill="#b0b0b0" /><path d="M1767.8 1483.5H1789.3M1767.8 1490.5H1789.3M1767.8 1497.6H1789.3" stroke="#d8d8d8" stroke-width="3.3"/></svg>
<svg class="b" style="left:18px;top:1515px" width="100" height="300" viewBox="18 1515 100 300" ><rect x="22" y="1526.1" width="15" height="15" rx="2.6" fill="#a0a0a0"/><path d="M24.6 1533.8H34.2" stroke="#1f2124" stroke-width="2.4"/><rect x="22" y="1586.1" width="15" height="15" rx="2.6" fill="#a0a0a0"/><path d="M24.6 1593.8H34.2" stroke="#1f2124" stroke-width="2.4"/><rect x="22" y="1676.1" width="15" height="15" rx="2.6" fill="#a0a0a0"/><path d="M24.6 1683.8H34.2" stroke="#1f2124" stroke-width="2.4"/><rect x="52" y="1616.1" width="15" height="15" rx="2.6" fill="#a0a0a0"/><path d="M54.9 1623.6999999999998H64.1M59.5 1619.1V1628.3" stroke="#1f2124" stroke-width="2.4"/><rect x="52" y="1646.1" width="15" height="15" rx="2.6" fill="#a0a0a0"/><path d="M54.9 1653.6999999999998H64.1M59.5 1649.1V1658.3" stroke="#1f2124" stroke-width="2.4"/><rect x="52" y="1706.1" width="15" height="15" rx="2.6" fill="#a0a0a0"/><path d="M54.9 1713.6999999999998H64.1M59.5 1709.1V1718.3" stroke="#1f2124" stroke-width="2.4"/><rect x="52" y="1736.1" width="15" height="15" rx="2.6" fill="#a0a0a0"/><path d="M54.9 1743.6999999999998H64.1M59.5 1739.1V1748.3" stroke="#1f2124" stroke-width="2.4"/><rect x="52" y="1766.1" width="15" height="15" rx="2.6" fill="#a0a0a0"/><path d="M54.9 1773.6999999999998H64.1M59.5 1769.1V1778.3" stroke="#1f2124" stroke-width="2.4"/><rect x="52" y="1796.1" width="15" height="15" rx="2.6" fill="#a0a0a0"/><path d="M54.9 1803.6999999999998H64.1M59.5 1799.1V1808.3" stroke="#1f2124" stroke-width="2.4"/><polygon points="47.90,1519.10 70.10,1519.10 70.10,1546.20 67.60,1546.20 59.00,1538.30 50.40,1546.20 47.90,1546.20" fill="#cabb80" /><path d="M78 1552.1H86.6L90.9 1555.8H101A2 2 0 0 1 103 1557.8V1571A2 2 0 0 1 101 1573H78A2 2 0 0 1 76 1571V1554.1A2 2 0 0 1 78 1552.1Z" fill="#a0a0a0"/><defs><linearGradient id="og" x1="0.2" y1="0.1" x2="0.8" y2="0.9"><stop offset="0" stop-color="#78bc00"/><stop offset="0.5" stop-color="#6cae00"/><stop offset="1" stop-color="#70b400"/></linearGradient>
<linearGradient id="og2" x1="1" y1="0.5" x2="0" y2="0.5"><stop offset="0" stop-color="#447a00"/><stop offset="0.2" stop-color="#3f7200"/><stop offset="0.55" stop-color="#5c9800"/><stop offset="0.85" stop-color="#4a8200"/><stop offset="1" stop-color="#5a9400"/></linearGradient></defs>
<circle cx="59.9" cy="1592.9" r="13.2" fill="url(#og)"/>
<clipPath id="oc"><circle cx="59.9" cy="1592.9" r="13.2"/></clipPath><ellipse cx="60.3" cy="1592.5" rx="11.9" ry="7.3" transform="rotate(-38 60.3 1592.5)" fill="url(#og2)" clip-path="url(#oc)"/>
<circle cx="59.4" cy="1593.1" r="5.5" fill="#1f2123"/><path d="M81.7 1613.6H97.6L101.9 1620.6999999999998V1622.0H77.3V1620.6999999999998Z" fill="#a0a0a0"/><path d="M77.3 1620.8H101.9V1622.1H77.3Z" fill="#7c7c7c"/><rect x="76" y="1623.3999999999999" width="27.2" height="8" rx="2.4" fill="#a0a0a0"/><circle cx="94" cy="1627.1" r="1.25" fill="#1f2124"/><circle cx="98.6" cy="1627.1" r="1.25" fill="#1f2124"/><path d="M81.7 1703.6H97.6L101.9 1710.6999999999998V1712.0H77.3V1710.6999999999998Z" fill="#a0a0a0"/><path d="M77.3 1710.8H101.9V1712.1H77.3Z" fill="#7c7c7c"/><rect x="76" y="1713.3999999999999" width="27.2" height="8" rx="2.4" fill="#a0a0a0"/><circle cx="94" cy="1717.1" r="1.25" fill="#1f2124"/><circle cx="98.6" cy="1717.1" r="1.25" fill="#1f2124"/><path d="M81.7 1733.6H97.6L101.9 1740.6999999999998V1742.0H77.3V1740.6999999999998Z" fill="#a0a0a0"/><path d="M77.3 1740.8H101.9V1742.1H77.3Z" fill="#7c7c7c"/><rect x="76" y="1743.3999999999999" width="27.2" height="8" rx="2.4" fill="#a0a0a0"/><circle cx="94" cy="1747.1" r="1.25" fill="#1f2124"/><circle cx="98.6" cy="1747.1" r="1.25" fill="#1f2124"/><path d="M81.7 1763.6H97.6L101.9 1770.6999999999998V1772.0H77.3V1770.6999999999998Z" fill="#a0a0a0"/><path d="M77.3 1770.8H101.9V1772.1H77.3Z" fill="#7c7c7c"/><rect x="76" y="1773.3999999999999" width="27.2" height="8" rx="2.4" fill="#a0a0a0"/><circle cx="94" cy="1777.1" r="1.25" fill="#1f2124"/><circle cx="98.6" cy="1777.1" r="1.25" fill="#1f2124"/><path d="M81.7 1793.6H97.6L101.9 1800.6999999999998V1802.0H77.3V1800.6999999999998Z" fill="#a0a0a0"/><path d="M77.3 1800.8H101.9V1802.1H77.3Z" fill="#7c7c7c"/><rect x="76" y="1803.3999999999999" width="27.2" height="8" rx="2.4" fill="#a0a0a0"/><circle cx="94" cy="1807.1" r="1.25" fill="#1f2124"/><circle cx="98.6" cy="1807.1" r="1.25" fill="#1f2124"/><rect x="76.8" y="1641.5" width="18.8" height="16" rx="2" fill="none" stroke="#a0a0a0" stroke-width="1.2"/><rect x="78.2" y="1650.1" width="16" height="5" rx="0.8" fill="#a0a0a0"/><circle cx="90" cy="1652.6" r="0.7" fill="#1f2124"/><circle cx="92.2" cy="1652.6" r="0.7" fill="#1f2124"/><path d="M94.8 1660.3H103M98.9 1656.2V1664.4" stroke="#c4c4c4" stroke-width="2"/><path fill-rule="evenodd" d="M48.6 1670.1H70.6A2.5 2.5 0 0 1 73.1 1672.6V1688.5A2.5 2.5 0 0 1 70.6 1691H48.6A2.5 2.5 0 0 1 46.1 1688.5V1672.6A2.5 2.5 0 0 1 48.6 1670.1ZM48.2 1672.6V1685.8H71V1672.6Z" fill="#a0a0a0"/><rect x="58" y="1691" width="3.1" height="2.2" fill="#a0a0a0"/><rect x="55" y="1693" width="9" height="1.3" fill="#a0a0a0"/></svg>
<svg class="b" style="left:1478px;top:1530px" width="20" height="165" viewBox="1478 1530 20 165" ><polygon points="1481.80,1537.80 1494.00,1537.80 1487.90,1544.20" fill="#b4b4b4" /><polygon points="1481.80,1683.00 1494.00,1683.00 1487.90,1689.40" fill="#b4b4b4" /></svg>
<svg class="b" style="left:1548px;top:1745px" width="130" height="142" viewBox="1548 1745 130 142" ><defs><linearGradient id="pg" x1="0" y1="0" x2="0" y2="1"><stop offset="0" stop-color="#919191"/><stop offset="1" stop-color="#7d7d7d"/></linearGradient></defs><polygon points="1577.50,1859.50 1552.40,1866.20 1577.50,1882.60" fill="#222222" /><polygon points="1577.20,1882.60 1666.30,1863.20 1666.30,1861.60 1577.20,1880.60" fill="#3c3c3c" /><polygon points="1576.70,1754.20 1649.80,1749.40 1666.00,1764.80 1666.00,1862.20 1576.70,1881.60" fill="url(#pg)" /><polygon points="1649.80,1749.40 1666.00,1764.80 1650.80,1766.80" fill="#cacaca" /><path d="M1601.1 1802.1L1647.1 1796.1" stroke="#747474" stroke-width="1.5"/><path d="M1601.1 1812.6L1647.1 1806.6" stroke="#747474" stroke-width="1.5"/><path d="M1601.1 1823.1L1647.1 1817.1" stroke="#747474" stroke-width="1.5"/><path d="M1601.1 1833.6L1647.1 1827.6" stroke="#747474" stroke-width="1.5"/><polygon points="1655.00,1848.30 1671.60,1865.20 1663.70,1866.70 1668.00,1874.10 1664.20,1875.90 1660.70,1868.70 1655.00,1873.60" fill="#c4c4c4" /></svg>
<svg class="b" style="left:1400px;top:1974px" width="30" height="25" viewBox="1400 1974 30 25" ><rect x="1402.3" y="1976.4" width="6.4" height="5.6" rx="0.8" fill="#9a9a9a"/><rect x="1410.6" y="1976.4" width="15.7" height="5.6" rx="0.8" fill="#9a9a9a"/><rect x="1402.3" y="1983.6" width="6.4" height="5.6" rx="0.8" fill="#9a9a9a"/><rect x="1410.6" y="1983.6" width="15.7" height="5.6" rx="0.8" fill="#9a9a9a"/><rect x="1402.3" y="1990.8" width="6.4" height="5.6" rx="0.8" fill="#9a9a9a"/><rect x="1410.6" y="1990.8" width="15.7" height="5.6" rx="0.8" fill="#9a9a9a"/></svg>
<div class="tx">
<span class="t" style="left:43.50px;top:13px;font-size:18px;line-height:18px;letter-spacing:-0.401px;word-spacing:0.000px;color:#000;-webkit-text-stroke:0;">Isaac Sim 2023.1.1 - New Stage</span>
<span class="t" style="left:12.20px;top:51px;font-size:17.5px;line-height:17.5px;letter-spacing:0.945px;word-spacing:0.000px;color:#cccccc;">File</span>
<span class="t" style="left:54.70px;top:51px;font-size:17.5px;line-height:17.5px;letter-spacing:0.236px;word-spacing:0.000px;color:#cccccc;">Edit</span>
<span class="t" style="left:98.30px;top:51px;font-size:17.5px;line-height:17.5px;letter-spacing:0.301px;word-spacing:0.000px;color:#cccccc;">Create</span>
<span class="t" style="left:164.60px;top:51px;font-size:17.5px;line-height:17.5px;letter-spacing:0.119px;word-spacing:0.000px;color:#cccccc;">Window</span>
<span class="t" style="left:239.60px;top:51px;font-size:17.5px;line-height:17.5px;letter-spacing:0.407px;word-spacing:-0.939px;color:#cccccc;">Isaac Utils</span>
<span class="t" style="left:335.50px;top:51px;font-size:17.5px;line-height:17.5px;letter-spacing:0.246px;word-spacing:-0.778px;color:#cccccc;">Isaac Examples</span>
<span class="t" style="left:473.70px;top:51px;font-size:17.5px;line-height:17.5px;letter-spacing:0.371px;word-spacing:0.000px;color:#cccccc;">Replicator</span>
<span class="t" style="left:568.40px;top:51px;font-size:17.5px;line-height:17.5px;letter-spacing:0.774px;word-spacing:0.000px;color:#cccccc;">Tools</span>
<span class="t" style="left:624.40px;top:51px;font-size:17.5px;line-height:17.5px;letter-spacing:0.700px;word-spacing:0.000px;color:#cccccc;">Profiler</span>
<span class="t" style="left:696.70px;top:51px;font-size:17.5px;line-height:17.5px;letter-spacing:0.424px;word-spacing:0.000px;color:#cccccc;">Layout</span>
<span class="t" style="left:764.30px;top:51px;font-size:17.5px;line-height:17.5px;letter-spacing:0.633px;word-spacing:-1.165px;color:#cccccc;">Assets simulation</span>
<span class="t" style="left:920.50px;top:51px;font-size:17.5px;line-height:17.5px;letter-spacing:1.014px;word-spacing:0.000px;color:#cccccc;">Help</span>
<span class="t" style="left:2393.60px;top:51px;font-size:17.5px;line-height:17.5px;letter-spacing:0.044px;word-spacing:0.000px;color:#ffffff;">LIVE</span>
<span class="t" style="left:2477.70px;top:51px;font-size:17.5px;line-height:17.5px;letter-spacing:-0.532px;word-spacing:0.000px;color:#cccccc;">CACHE:</span>
<span class="t" style="left:2545.80px;top:51px;font-size:17.5px;line-height:17.5px;letter-spacing:-2.412px;word-spacing:0.000px;color:#76b900;">ON</span>
<span class="t" style="left:74.50px;top:83px;font-size:17.5px;line-height:17.5px;letter-spacing:0.470px;word-spacing:0.000px;color:#d6d6d6;">Viewport</span>
<span class="t" style="left:185.20px;top:129px;font-size:17.5px;line-height:17.5px;letter-spacing:0.217px;word-spacing:-0.749px;color:#d0d0d0;">RTX - Real-Time</span>
<span class="t" style="left:454.40px;top:129px;font-size:17.5px;line-height:17.5px;letter-spacing:0.550px;word-spacing:0.000px;color:#d0d0d0;">Perspective</span>
<span class="t" style="left:1622.30px;top:129px;font-size:17.5px;line-height:17.5px;letter-spacing:0.359px;word-spacing:-0.891px;color:#d0d0d0;">Stage Lights</span>
<span class="t" style="left:1503.00px;top:182px;font-size:17.5px;line-height:17.5px;letter-spacing:0.259px;word-spacing:-0.791px;color:#dadada;">FPS: 345.28, Frame time: 2.90 ms</span>
<span class="t" style="left:1291.50px;top:208px;font-size:17.5px;line-height:17.5px;letter-spacing:0.063px;word-spacing:-0.595px;color:#dadada;">NVIDIA GeForce RTX 4070 Ti: 2.4 GiB used, 8.6 GiB available</span>
<span class="t" style="left:1383.00px;top:235px;font-size:17.5px;line-height:17.5px;letter-spacing:0.259px;word-spacing:-0.791px;color:#dadada;">Host Memory: 27.7 GiB used, 100.1 GiB available</span>
<span class="t" style="left:1696.00px;top:261px;font-size:17.5px;line-height:17.5px;letter-spacing:0.236px;word-spacing:0.000px;color:#dadada;">1280x720</span>
<span class="t" style="left:1814.30px;top:83px;font-size:17.5px;line-height:17.5px;letter-spacing:0.275px;word-spacing:0.000px;color:#d4d4d4;">Stage</span>
<span class="t" style="left:1905.40px;top:83px;font-size:17.5px;line-height:17.5px;letter-spacing:0.488px;word-spacing:0.000px;color:#8e8e8e;">Layer</span>
<span class="t" style="left:1995.30px;top:83px;font-size:17.5px;line-height:17.5px;letter-spacing:0.253px;word-spacing:-0.785px;color:#8e8e8e;">Render Settings</span>
<span class="t" style="left:1818.50px;top:124px;font-size:17.5px;line-height:17.5px;letter-spacing:0.017px;word-spacing:0.000px;color:#8c8c8c;">Search</span>
<span class="t" style="left:1826.50px;top:161px;font-size:14.6px;line-height:14.6px;letter-spacing:0.408px;word-spacing:-0.852px;color:#e0e0e0;">Name (Old to New)</span>
<span class="t" style="left:2420.30px;top:161px;font-size:14.6px;line-height:14.6px;letter-spacing:-0.007px;word-spacing:0.000px;color:#e0e0e0;">Type</span>
<span class="t" style="left:1878.40px;top:185px;font-size:17.5px;line-height:17.5px;letter-spacing:0.544px;word-spacing:-1.076px;color:#778a8e;">World (defaultPrim)</span>
<span class="t" style="left:1877.40px;top:215px;font-size:17.5px;line-height:17.5px;letter-spacing:0.382px;word-spacing:0.000px;color:#778a8e;">Environment</span>
<span class="t" style="left:2417.50px;top:185px;font-size:17.5px;line-height:17.5px;letter-spacing:0.401px;word-spacing:0.000px;color:#778a8e;">Xform</span>
<span class="t" style="left:2417.50px;top:215px;font-size:17.5px;line-height:17.5px;letter-spacing:0.401px;word-spacing:0.000px;color:#778a8e;">Xform</span>
<span class="t" style="left:1813.10px;top:1051px;font-size:17.5px;line-height:17.5px;letter-spacing:0.387px;word-spacing:0.000px;color:#d4d4d4;">Property</span>
<span class="t" style="left:1928.20px;top:1051px;font-size:17.5px;line-height:17.5px;letter-spacing:0.207px;word-spacing:-0.739px;color:#8e8e8e;">Synthetic Data Recorder</span>
<span class="t" style="left:2167.20px;top:1051px;font-size:17.5px;line-height:17.5px;letter-spacing:0.318px;word-spacing:-0.850px;color:#8e8e8e;">Semantics Schema Editor</span>
<span class="t" style="left:1869.40px;top:1086px;font-size:17.5px;line-height:17.5px;letter-spacing:0.077px;word-spacing:0.000px;color:#5c5c5c;">Search</span>
<span class="t" style="left:9.70px;top:1437px;font-size:17.5px;line-height:17.5px;letter-spacing:0.245px;word-spacing:0.000px;color:#d4d4d4;">Content</span>
<span class="t" style="left:118.70px;top:1437px;font-size:17.5px;line-height:17.5px;letter-spacing:0.171px;word-spacing:0.000px;color:#8e8e8e;">Console</span>
<span class="t" style="left:228.60px;top:1437px;font-size:17.5px;line-height:17.5px;letter-spacing:0.336px;word-spacing:-0.868px;color:#8e8e8e;">Isaac Assets (Beta)</span>
<span class="t" style="left:36.80px;top:1483px;font-size:17.5px;line-height:17.5px;letter-spacing:0.553px;word-spacing:0.000px;color:#adadad;">Import</span>
<span class="t" style="left:1328.80px;top:1483px;font-size:17.5px;line-height:17.5px;letter-spacing:-0.063px;word-spacing:0.000px;color:#5c5c5c;">Search</span>
<span class="t" style="left:79.70px;top:1526px;font-size:17.5px;line-height:17.5px;letter-spacing:0.291px;word-spacing:0.000px;color:#a8a8a8;">Bookmarks</span>
<span class="t" style="left:109.60px;top:1556px;font-size:17.5px;line-height:17.5px;letter-spacing:0.058px;word-spacing:-0.590px;color:#a8a8a8;">Built In URDF Files</span>
<span class="t" style="left:80.70px;top:1586px;font-size:17.5px;line-height:17.5px;letter-spacing:0.216px;word-spacing:0.000px;color:#a8a8a8;">Omniverse</span>
<span class="t" style="left:109.60px;top:1616px;font-size:17.5px;line-height:17.5px;letter-spacing:0.637px;word-spacing:0.000px;color:#a8a8a8;">localhost</span>
<span class="t" style="left:110.60px;top:1646px;font-size:17.5px;line-height:17.5px;letter-spacing:0.245px;word-spacing:-0.777px;color:#a8a8a8;">Add New Connection ...</span>
<span class="t" style="left:79.70px;top:1676px;font-size:17.5px;line-height:17.5px;letter-spacing:0.515px;word-spacing:-1.047px;color:#a8a8a8;">My Computer</span>
<span class="t" style="left:109.60px;top:1706px;font-size:17.5px;line-height:17.5px;letter-spacing:0.422px;word-spacing:0.000px;color:#a8a8a8;">Desktop</span>
<span class="t" style="left:109.60px;top:1736px;font-size:17.5px;line-height:17.5px;letter-spacing:0.430px;word-spacing:0.000px;color:#a8a8a8;">Documents</span>
<span class="t" style="left:109.60px;top:1766px;font-size:17.5px;line-height:17.5px;letter-spacing:0.284px;word-spacing:0.000px;color:#a8a8a8;">Downloads</span>
<span class="t" style="left:110.60px;top:1796px;font-size:17.5px;line-height:17.5px;letter-spacing:-0.838px;word-spacing:0.000px;color:#a8a8a8;">C:</span>
<span class="t" style="left:1501.50px;top:1533px;font-size:17.5px;line-height:17.5px;letter-spacing:0.614px;word-spacing:-1.146px;color:#d4d4d4;">No files selected</span>
<span class="t" style="left:1471.40px;top:1573px;font-size:17.5px;line-height:17.5px;letter-spacing:0.654px;word-spacing:-1.186px;color:#a8a8a8;">Date Modified</span>
<span class="t" style="left:1597.70px;top:1573px;font-size:17.5px;line-height:17.5px;letter-spacing:0.701px;word-spacing:-1.233px;color:#a8a8a8;">11/25/2025 01:31PM</span>
<span class="t" style="left:1472.40px;top:1594px;font-size:17.5px;line-height:17.5px;letter-spacing:0.110px;word-spacing:-0.642px;color:#a8a8a8;">Created by</span>
<span class="t" style="left:1471.40px;top:1615px;font-size:17.5px;line-height:17.5px;letter-spacing:0.666px;word-spacing:-1.198px;color:#a8a8a8;">Modified by</span>
<span class="t" style="left:1471.40px;top:1636px;font-size:17.5px;line-height:17.5px;letter-spacing:0.555px;word-spacing:-1.087px;color:#a8a8a8;">File size</span>
<span class="t" style="left:1708.50px;top:1636px;font-size:17.5px;line-height:17.5px;letter-spacing:-0.112px;word-spacing:-0.420px;color:#a8a8a8;">0.00 KB</span>
<span class="t" style="left:1502.50px;top:1678px;font-size:17.5px;line-height:17.5px;letter-spacing:0.265px;word-spacing:0.000px;color:#d4d4d4;">Checkpoints</span>
<span class="t" style="left:1516.50px;top:1923px;font-size:17.5px;line-height:17.5px;letter-spacing:0.389px;word-spacing:-0.921px;color:#a8a8a8;">Location does not support</span>
<span class="t" style="left:1568.60px;top:1944px;font-size:17.5px;line-height:17.5px;letter-spacing:0.282px;word-spacing:0.000px;color:#a8a8a8;">Checkpoints.</span>
<span class="t" style="left:108.70px;top:1395px;font-size:17.5px;line-height:17.5px;letter-spacing:0.000px;word-spacing:0.000px;color:#e0e0e0;">m</span>
<span class="t" style="left:111.00px;top:1323px;font-size:17.5px;line-height:17.5px;letter-spacing:0.000px;word-spacing:0.000px;color:#5b8fba;">Z</span>
<span class="t" style="left:86.90px;top:1365px;font-size:17.5px;line-height:17.5px;letter-spacing:0.000px;word-spacing:0.000px;color:#c4666c;">X</span>
<span class="t" style="left:134.60px;top:1365px;font-size:17.5px;line-height:17.5px;letter-spacing:0.000px;word-spacing:0.000px;color:#6fae74;">Y</span>
</div>
</body></html>
